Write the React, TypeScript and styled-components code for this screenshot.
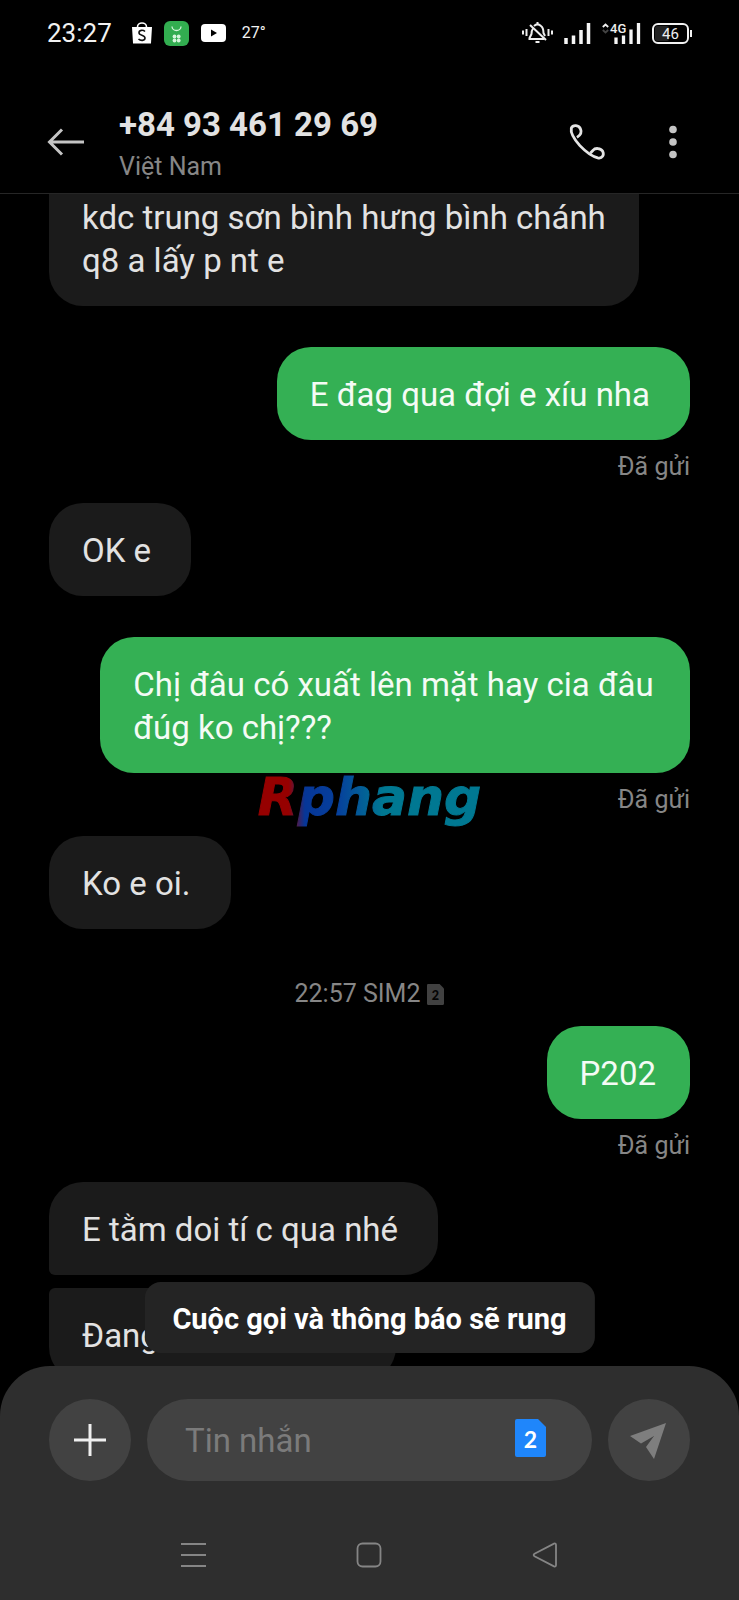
import React from "react";
import styled, { createGlobalStyle } from "styled-components";

const GlobalStyle = createGlobalStyle`
  * { box-sizing: border-box; }
  body {
    margin: 0;
    background: #000;
    font-family: Roboto, "Noto Sans", sans-serif;
  }
  button { padding: 0; border: 0; background: none; color: inherit; font: inherit; cursor: pointer; }
  svg { display: block; overflow: visible; }
`;

const Screen = styled.div`
  position: relative;
  display: flex;
  flex-direction: column;
  height: 100vh;
  overflow: hidden;
  background: #000;
  color: #e2e2e2;
`;

const StatusBar = styled.div`
  display: flex;
  justify-content: space-between;
  align-items: center;
  flex: none;
  height: 66px;
  padding: 0 47px;
  color: #f2f2f2;
`;

const StatusGroup = styled.div<{ $gap: number }>`
  display: flex;
  align-items: center;
  gap: ${(p) => p.$gap}px;
`;

const Clock = styled.time`
  margin-right: 8px;
  font-size: 26px;
  line-height: 30px;
`;

const Temperature = styled.span`
  margin-left: 4px;
  font-size: 16px;
  line-height: 20px;
`;

const AppBar = styled.header`
  display: flex;
  align-items: center;
  flex: none;
  padding: 39px 47px 12px;
  border-bottom: 1px solid #262626;
`;

const IconButton = styled.button`
  display: flex;
  align-items: center;
  justify-content: center;
  flex: none;
`;

const Contact = styled.div`
  flex: 1;
  min-width: 0;
  margin-left: 34px;
`;

const ContactName = styled.h1`
  margin: 0 0 8px;
  font-size: 33px;
  font-weight: 700;
  line-height: 40px;
`;

const ContactPlace = styled.p`
  margin: 0;
  color: #868686;
  font-size: 25px;
  line-height: 28px;
`;

const AppBarActions = styled.div`
  display: flex;
  align-items: center;
  gap: 48px;
`;

const Conversation = styled.main`
  flex: 1;
  min-height: 0;
  overflow: hidden;
`;

const MessageList = styled.div`
  display: flex;
  flex-direction: column;
  margin-top: -24px;
  padding: 0 49px;
`;

type Side = "in" | "out";

const Message = styled.div<{ $side: Side; $after: number }>`
  display: flex;
  flex-direction: column;
  align-items: ${(p) => (p.$side === "in" ? "flex-start" : "flex-end")};
  margin-bottom: ${(p) => p.$after}px;
`;

/* Bubbles that wrap fill the width; one-line ones keep more room at the end. */
const endRoom = { wrap: 28, word: 34, line: 40 };

const Bubble = styled.p<{ $side: Side; $radius?: string; $end?: keyof typeof endRoom }>`
  max-width: 92%;
  margin: 0;
  padding: 26px ${(p) => endRoom[p.$end ?? "line"]}px 24px 33px;
  border-radius: ${(p) => p.$radius ?? "34px"};
  background: ${(p) => (p.$side === "in" ? "#1b1b1b" : "#34b054")};
  color: ${(p) => (p.$side === "in" ? "#e2e2e2" : "#f4fbf5")};
  font-size: 33px;
  line-height: 43px;
`;

const Receipt = styled.span`
  margin-top: 13px;
  color: #868686;
  font-size: 25px;
  line-height: 28px;
`;

const Stamp = styled.div`
  display: flex;
  justify-content: center;
  align-items: center;
  gap: 7px;
  margin-bottom: 18px;
  color: #868686;
  font-size: 25px;
  line-height: 28px;
`;

const Watermark = styled.div`
  position: absolute;
  inset: 0;
  display: flex;
  align-items: center;
  justify-content: center;
  padding-bottom: 6px;
  pointer-events: none;
`;

const WatermarkText = styled.span`
  padding: 0 4px;
  background: linear-gradient(90deg, #960000 15%, #063697 22%, #063f9c 36%, #007892 56%);
  background-clip: text;
  -webkit-background-clip: text;
  -webkit-text-stroke: 1px transparent;
  color: transparent;
  font-family: "DejaVu Sans", sans-serif;
  font-size: 52px;
  font-style: italic;
  font-weight: 700;
  line-height: 64px;
`;

const BottomPanel = styled.footer`
  position: relative;
  flex: none;
  padding: 33px 49px 32px;
  border-radius: 50px 50px 0 0;
  background: #2e2e2e;
`;

const Toast = styled.div`
  position: absolute;
  bottom: 100%;
  left: 50%;
  margin-bottom: 13px;
  padding: 20px 28px 17px;
  border-radius: 16px;
  background: #242424;
  color: #fff;
  font-size: 29px;
  font-weight: 700;
  line-height: 34px;
  white-space: nowrap;
  transform: translateX(-50%);
`;

const Composer = styled.form`
  display: flex;
  gap: 16px;
`;

const RoundButton = styled(IconButton)`
  width: 82px;
  height: 82px;
  border-radius: 50%;
  background: #424242;
`;

const Field = styled.div`
  display: flex;
  align-items: center;
  flex: 1;
  min-width: 0;
  padding: 0 46px 0 38px;
  border-radius: 41px;
  background: #424242;
`;

const SimButton = styled(IconButton)`
  padding-bottom: 4px;
`;

const TextInput = styled.input`
  flex: 1;
  min-width: 0;
  height: 43px;
  padding: 0;
  border: 0;
  outline: 0;
  background: none;
  color: #e2e2e2;
  font-family: inherit;
  font-size: 33px;
  &::placeholder { color: #7b7b7b; opacity: 1; }
`;

const SystemNav = styled.nav`
  display: flex;
  justify-content: space-around;
  margin-top: 61px;
  padding: 0 9%;
`;

const SimIcon = ({ size, fill, ink, weight }: { size: number; fill: string; ink: string; weight: number }) => (
  <svg width={size} height={Math.round(size * 1.24)} viewBox="0 0 31 38" role="img" aria-label="SIM 2">
    <path d="M2 0H23L31 8V36Q31 38 29 38H2Q0 38 0 36V2Q0 0 2 0Z" fill={fill} />
    <text x="15.5" y="29" textAnchor="middle" fill={ink} fontFamily="Lato, sans-serif" fontSize="23" fontWeight={weight}>2</text>
  </svg>
);

const ShopIcon = () => (
  <svg width="20" height="22" viewBox="0 0 20 22">
    <path d="M5.5 6V5a4.5 4 0 0 1 9 0v1" fill="none" stroke="#fff" strokeWidth="1.6" />
    <path d="M0 5H20L19 21.500H1Z" fill="#fff" />
    <path d="M13 9.500C11 7.500 7 8 7 10.800C7 14 13 12.500 13 16C13 19 8.500 19 6.500 17" fill="none" stroke="#111" strokeWidth="1.6" />
  </svg>
);

const MarketIcon = () => (
  <svg width="25" height="25" viewBox="0 0 25 25">
    <rect width="25" height="25" rx="6" fill="#32ad50" />
    <path d="M8 5.500a4.500 4 0 0 0 9 0" fill="none" stroke="#d5f5dc" strokeWidth="1.300" />
    <g fill="#d5f5dc">
      <circle cx="10.500" cy="15.500" r="1.900" /><circle cx="14.700" cy="15.500" r="1.900" />
      <circle cx="10.500" cy="19.500" r="1.900" /><circle cx="14.700" cy="19.500" r="1.900" />
    </g>
  </svg>
);

const VideoIcon = () => (
  <svg width="25" height="18" viewBox="0 0 25 18">
    <rect width="25" height="18" rx="4" fill="#fff" />
    <path d="M10 5.500L16 9L10 12.500Z" fill="#000" />
  </svg>
);

const MutedBellIcon = () => (
  <svg width="31" height="22" viewBox="0 0 31 22" fill="none" stroke="#eee" strokeWidth="2">
    <path d="M1 8.500V12.500M4.500 7V14M26.500 7V14M30 8.500V12.500" />
    <path d="M11 6.500Q9.500 8.500 9.500 12L7.500 16V17H22" />
    <path d="M12 4Q15.500 .8 19 4Q21.500 6 21.500 11L23 14" />
    <path d="M8 3L24 18" />
    <path d="M13.500 20H17.500M14.500 1H16.500" />
  </svg>
);

const SignalIcon = () => (
  <svg width="27" height="21" viewBox="0 0 27 21" stroke="#f5f5f5" strokeWidth="3.500">
    <path d="M2 15V21M9.500 12.500V21M17 7V21M24.500 0V21" />
  </svg>
);

const DataSignalIcon = () => (
  <svg width="39" height="21" viewBox="0 0 39 21">
    <path d="M.8 4L3.500 1.500L6.200 4" fill="none" stroke="#eee" strokeWidth="1.800" />
    <path d="M.8 7L3.500 9.500L6.200 7" fill="none" stroke="#444" strokeWidth="1.800" />
    <text x="8" y="10" fill="#eee" fontFamily="Roboto, sans-serif" fontSize="13" fontWeight="500">4G</text>
    <path d="M14 14.500V21M21.500 12.500V21M29 6.500V21M36.500 0V21" stroke="#f5f5f5" strokeWidth="3.300" />
  </svg>
);

const BatteryIcon = () => (
  <svg width="40" height="21" viewBox="0 0 40 21">
    <rect x="1" y="1" width="35" height="19" rx="5" fill="none" stroke="#f2f2f2" strokeWidth="2" />
    <rect x="3" y="3" width="14" height="15" rx="2" fill="#222" />
    <path d="M39 7V14" stroke="#f2f2f2" strokeWidth="2" />
    <text x="18.500" y="15.800" textAnchor="middle" fill="#eee" fontFamily="Roboto, sans-serif" fontSize="15">46</text>
  </svg>
);

export default function App() {
  return (
    <Screen>
      <GlobalStyle />
      <StatusBar>
        <StatusGroup $gap={12}>
          <Clock>23:27</Clock>
          <ShopIcon />
          <MarketIcon />
          <VideoIcon />
          <Temperature>27°</Temperature>
        </StatusGroup>
        <StatusGroup $gap={11}>
          <MutedBellIcon />
          <SignalIcon />
          <DataSignalIcon />
          <BatteryIcon />
        </StatusGroup>
      </StatusBar>

      <AppBar>
        <IconButton aria-label="Quay lại">
          <svg width="38" height="28" viewBox="0 0 38 28" fill="none" stroke="#c4c4c4" strokeWidth="3">
            <path d="M37 13H3M15 .5L2.500 13L15 25.500" />
          </svg>
        </IconButton>
        <Contact>
          <ContactName>+84 93 461 29 69</ContactName>
          <ContactPlace>Việt Nam</ContactPlace>
        </Contact>
        <AppBarActions>
          <IconButton aria-label="Gọi">
            <svg width="37" height="38" viewBox="596 371 112 114" fill="none" stroke="#e4e4e4" strokeWidth="8.500" strokeLinejoin="round">
              <path d="M620 411C630 405 636 398 631 386C626 373 608 372 603 383C600 397 612 417 629 436C647 455 667 469 683 473C697 476 703 464 698 453C692 443 675 442 669 450L661 458" />
            </svg>
          </IconButton>
          <IconButton aria-label="Tuỳ chọn khác">
            <svg width="38" height="34" viewBox="0 0 38 34" fill="#c4c4c4">
              <circle cx="19" cy="3.500" r="3.800" /><circle cx="19" cy="16" r="3.800" /><circle cx="19" cy="28.500" r="3.800" />
            </svg>
          </IconButton>
        </AppBarActions>
      </AppBar>

      <Conversation>
        <MessageList>
          <Message $side="in" $after={41}>
            <Bubble $side="in" $end="wrap" $radius="6px 6px 34px 34px">kdc trung sơn bình hưng bình chánh q8 a lấy p nt e</Bubble>
          </Message>
          <Message $side="out" $after={22}>
            <Bubble $side="out">E đag qua đợi e xíu nha</Bubble>
            <Receipt>Đã gửi</Receipt>
          </Message>
          <Message $side="in" $after={41}>
            <Bubble $side="in">OK e</Bubble>
          </Message>
          <Message $side="out" $after={22}>
            <Bubble $side="out" $end="wrap">Chị đâu có xuất lên mặt hay cia đâu đúg ko chị???</Bubble>
            <Receipt>Đã gửi</Receipt>
          </Message>
          <Message $side="in" $after={51}>
            <Bubble $side="in">Ko e oi.</Bubble>
          </Message>
          <Stamp>
            22:57 SIM2
            <SimIcon size={17} fill="#414141" ink="#050505" weight={900} />
          </Stamp>
          <Message $side="out" $after={22}>
            <Bubble $side="out" $end="word">P202</Bubble>
            <Receipt>Đã gửi</Receipt>
          </Message>
          <Message $side="in" $after={13}>
            <Bubble $side="in" $radius="34px 34px 34px 6px">E tằm doi tí c qua nhé</Bubble>
          </Message>
          <Message $side="in" $after={13}>
            <Bubble $side="in" $end="word" $radius="6px 34px 34px 34px">Đang nhận khách e</Bubble>
          </Message>
        </MessageList>
      </Conversation>

      <BottomPanel>
        <Toast role="status">Cuộc gọi và thông báo sẽ rung</Toast>
        <Composer onSubmit={(e) => e.preventDefault()}>
          <RoundButton type="button" aria-label="Thêm">
            <svg width="32" height="32" viewBox="0 0 32 32" stroke="#efefef" strokeWidth="3">
              <path d="M16 0V32M0 16H32" />
            </svg>
          </RoundButton>
          <Field>
            <TextInput type="text" aria-label="Tin nhắn" placeholder="Tin nhắn" />
            <SimButton type="button" aria-label="Chọn SIM">
              <SimIcon size={31} fill="#1f86fb" ink="#fff" weight={700} />
            </SimButton>
          </Field>
          <RoundButton type="submit" aria-label="Gửi">
            <svg width="40" height="40" viewBox="0 0 40 40" fill="#7e7e7e">
              <path d="M1 16L37 3L25 39L17 27L25 16L12 23.500Z" />
            </svg>
          </RoundButton>
        </Composer>
        <SystemNav aria-label="Điều hướng">
          <IconButton aria-label="Ứng dụng gần đây">
            <svg width="26" height="26" viewBox="0 0 26 26" stroke="#858585" strokeWidth="2">
              <path d="M0 2H25M0 13H25M0 24H25" />
            </svg>
          </IconButton>
          <IconButton aria-label="Màn hình chính">
            <svg width="26" height="26" viewBox="0 0 26 26" fill="none" stroke="#858585" strokeWidth="1.800">
              <rect x="1.500" y="1.500" width="23" height="23" rx="5" />
            </svg>
          </IconButton>
          <IconButton aria-label="Trở lại">
            <svg width="26" height="26" viewBox="0 0 26 26" fill="none" stroke="#858585" strokeWidth="1.800">
              <path d="M2.500 11.800L22 1.600Q24 1 24 3V23Q24 25 22 24.400L2.500 14.200Q.8 13 2.500 11.800Z" />
            </svg>
          </IconButton>
        </SystemNav>
      </BottomPanel>

      <Watermark aria-hidden="true">
        <WatermarkText>Rphang</WatermarkText>
      </Watermark>
    </Screen>
  );
}
